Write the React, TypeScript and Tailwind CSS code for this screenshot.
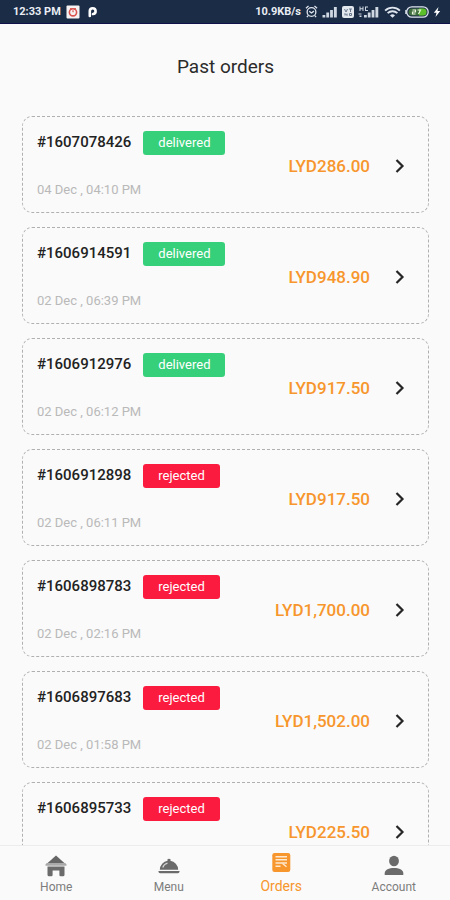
import React, { useState } from 'react';

type OrderStatus = 'delivered' | 'rejected';

interface Order {
  id: string;
  status: OrderStatus;
  date?: string;
  total: string;
}

const orders: Order[] = [
  { id: '1607078426', status: 'delivered', date: '04 Dec , 04:10 PM', total: 'LYD286.00' },
  { id: '1606914591', status: 'delivered', date: '02 Dec , 06:39 PM', total: 'LYD948.90' },
  { id: '1606912976', status: 'delivered', date: '02 Dec , 06:12 PM', total: 'LYD917.50' },
  { id: '1606912898', status: 'rejected', date: '02 Dec , 06:11 PM', total: 'LYD917.50' },
  { id: '1606898783', status: 'rejected', date: '02 Dec , 02:16 PM', total: 'LYD1,700.00' },
  { id: '1606897683', status: 'rejected', date: '02 Dec , 01:58 PM', total: 'LYD1,502.00' },
  { id: '1606895733', status: 'rejected', total: 'LYD225.50' },
];

const statusColors: Record<OrderStatus, string> = {
  delivered: 'bg-[#37d07a]',
  rejected: 'bg-[#fb1b3f]',
};

const SignalIcon = () => (
  <svg viewBox="0 0 16 12" className="h-3 w-4" fill="#cfd7e2">
    <path d="M0.500 9h2.800v2.500H0.500zM4.300 6.500h2.800v5H4.300zM8.100 4h2.800v7.500H8.100zM11.900 1h2.900v10.500h-2.900z" />
  </svg>
);

const StatusBar = () => (
  <header className="flex h-6 shrink-0 items-center justify-between border-b border-[#10104a] bg-[#1b2c46] pl-[13px] pr-[9px] text-[11px] font-bold leading-4 text-[#e9edf3]">
    <div className="flex items-center gap-[5px]">
      <span>12:33 PM</span>
      <svg viewBox="0 0 14 14" className="size-[14px]">
        <rect x="0.5" y="0.5" width="13" height="13" rx="1" fill="#f6f2f3" />
        <circle cx="7" cy="7.3" r="3.6" fill="none" stroke="#d9534f" strokeWidth="1.6" />
        <path d="M4 3.6l2.2.6M10 3.6l-2.2.6M7 5.2v2" stroke="#d9534f" strokeWidth="1.2" />
      </svg>
      <svg viewBox="0 0 12 14" className="ml-[2px] h-[14px] w-3">
        <path
          d="M2.800 11V6a2.900 2.900 0 1 1 3.200 3"
          fill="none"
          stroke="#fff"
          strokeWidth="2.600"
          strokeLinecap="round"
        />
      </svg>
    </div>
    <div className="flex items-center gap-1">
      <span>10.9KB/s</span>
      <svg viewBox="0 0 14 14" className="size-[13px]" fill="none" stroke="#dfe5ee" strokeWidth="1.4">
        <circle cx="7" cy="7.6" r="4.7" />
        <path d="M1 3.6L3.8 1.2M13 3.6l-2.8-2.4M4.6 6.6L7 8.6l2.6-2M3.4 11.4L2 13M10.6 11.4L12 13" />
      </svg>
      <SignalIcon />
      <svg viewBox="0 0 12 12" className="size-3">
        <rect width="12" height="12" rx="2" fill="#e3e8ef" />
        <path d="M2.5 3l1.500 3 1.500-3M7 3h3M8.500 3v3M3 9.500V7.500l2 2v-2M7.500 7.500h2v2h-2z" fill="none" stroke="#6b788c" strokeWidth="1" />
      </svg>
      <svg viewBox="0 0 22 12" className="h-3 w-[22px]" fill="#cfd7e2">
        <path d="M6 9h2.800v2.500H6zM9.800 6.500h2.800v5H9.800zM13.600 4h2.800v7.500h-2.800zM17.400 1h2.900v10.500h-2.900z" />
        <path d="M1.500 0.500h1v4.500h-1zM4.500 0.500h1v4.500h-1zM2 2.300h3v1H2zM7 0.500h3v1H8v2.500h2v1H7zM0.500 7.500h3v1H0.500zM1.500 9.500h2v1.500h-2z" />
      </svg>
      <svg viewBox="0 0 18 13" className="h-3 w-[17px]" fill="none" stroke="#dfe5ee" strokeWidth="2">
        <path d="M1 5a11.500 11.500 0 0 1 16 0M3.700 7.800a7.600 7.600 0 0 1 10.600 0" />
        <path d="M6.300 10.200a4 4 0 0 1 5.400 0L9 12.800z" fill="#dfe5ee" stroke="none" />
      </svg>
      <svg viewBox="0 0 24 12" className="h-3 w-6">
        <rect x="1.700" y="0.800" width="21.500" height="10.400" rx="5.200" fill="#1b2c46" stroke="#dfe5ee" strokeWidth="1.300" />
        <path d="M1 4v4" stroke="#dfe5ee" strokeWidth="1.500" />
        <path d="M7 2.500h11a3.500 3.500 0 0 1 0 7H7a3.500 3.500 0 0 1 0-7z" fill="#3f6f3d" />
        <path d="M14 2.500h4a3.500 3.500 0 0 1 0 7h-4z" fill="#5cc02a" />
        <path d="M7.500 4h3v2h-3v2h3M12.500 4h3l-2 4" fill="none" stroke="#e9f5df" strokeWidth="1.200" />
      </svg>
      <svg viewBox="0 0 8 12" className="h-3 w-2">
        <path d="M5.500 1L.800 6.800h2.700L2.500 11l4.700-6H4.500z" fill="#fff" />
      </svg>
    </div>
  </header>
);

const OrderCard: React.FC<{ order: Order }> = ({ order }) => (
  <li>
    <button
      type="button"
      className="flex w-full items-center rounded-[10px] border border-dashed border-[#b0b0b0] px-[14px] pb-3 pt-[14px] text-left"
    >
      <span className="flex flex-1 flex-col gap-6">
        <span className="flex items-start gap-3">
          <span className="text-[15px] font-medium leading-[22px] text-[#222]">#{order.id}</span>
          <span
            className={`rounded-[3px] px-[15px] text-[13px] leading-6 text-white ${statusColors[order.status]}`}
          >
            {order.status}
          </span>
        </span>
        <span className="h-[21px] text-[13px] leading-[21px] text-[#b9b9b9]">{order.date}</span>
      </span>
      <span className="text-[17px] font-medium leading-6 text-[#f7962c]">{order.total}</span>
      <svg viewBox="0 0 12 16" className="ml-6 mr-2 h-4 w-3" fill="none" stroke="#262626" strokeWidth="2.200">
        <path d="M2.500 2l6 6-6 6" />
      </svg>
    </button>
  </li>
);

const HomeIcon = () => (
  <svg viewBox="0 0 24 24" className="size-6">
    <path d="M12 1.500L2.500 10h19z" fill="#666" />
    <path d="M1.500 10.200L3 9h18l1.500 1.200v1.600h-21z" fill="#a9a9a9" />
    <path
      d="M3.500 12.600h17v8.200a1.500 1.500 0 0 1-1.500 1.500h-2.300a1.300 1.300 0 0 1-1.300-1.300v-4.500H8.600V21a1.300 1.300 0 0 1-1.300 1.300H5a1.500 1.500 0 0 1-1.500-1.500z"
      fill="#6b6b6b"
    />
  </svg>
);

const MenuIcon = () => (
  <svg viewBox="0 0 24 24" className="size-6" fill="#6b6b6b">
    <path d="M2.800 15.800a9.200 9.600 0 0 1 7.800-9 1.500 1.500 0 1 1 2.800 0 9.200 9.600 0 0 1 7.800 9z" />
    <path d="M1.500 17h21v.6a1.600 1.600 0 0 1-1.600 1.600H3.100a1.600 1.600 0 0 1-1.600-1.600z" />
    <path d="M5.800 13.500a6.500 6.500 0 0 1 4.700-4.300" fill="none" stroke="#d5d5d5" strokeWidth="1.200" />
  </svg>
);

const OrdersIcon = () => (
  <svg viewBox="0 0 24 24" className="size-6">
    <rect x="3.300" y="2" width="18" height="19" rx="2.200" fill="#f7962c" />
    <path d="M6.500 5.700h11.500M6.500 8.800h11.500M6.500 12h11.500" stroke="#ffe9cf" strokeWidth="1.400" />
    <path d="M6.500 15.300h5M13.500 12.500l4 3.300" stroke="#ffe9cf" strokeWidth="1.400" />
  </svg>
);

const AccountIcon = () => (
  <svg viewBox="0 0 24 24" className="size-6" fill="#6b6b6b">
    <ellipse cx="12" cy="7" rx="4.900" ry="5.300" />
    <path d="M2.700 21v-1.700c0-3.600 4.400-5.300 9.300-5.300s9.300 1.700 9.300 5.300V21z" />
  </svg>
);

const tabs = [
  { label: 'Home', Icon: HomeIcon },
  { label: 'Menu', Icon: MenuIcon },
  { label: 'Orders', Icon: OrdersIcon },
  { label: 'Account', Icon: AccountIcon },
];

const App: React.FC = () => {
  const [activeTab, setActiveTab] = useState('Orders');

  return (
    <div className="flex h-screen flex-col bg-[#fafafa] font-[Roboto,sans-serif]">
      <StatusBar />
      <main className="flex-1 overflow-y-auto pl-[22px] pr-[21px] [scrollbar-width:none]">
        <h1 className="pb-[37px] pt-[31px] text-center text-[19px] leading-6 text-[#2b2b2b]">Past orders</h1>
        <ul className="flex flex-col gap-[14px] pb-4">
          {orders.map((order) => (
            <OrderCard key={order.id} order={order} />
          ))}
        </ul>
      </main>
      <nav className="grid h-[55px] shrink-0 grid-cols-4 border-t border-[#ececec] bg-[#fafafa]">
        {tabs.map(({ label, Icon }) => {
          const isActive = activeTab === label;
          return (
            <button
              key={label}
              type="button"
              onClick={() => setActiveTab(label)}
              className={`flex flex-col items-center leading-4 ${
                isActive ? 'gap-[3px] pt-[5px] text-[14px] text-[#f7962c]' : 'gap-px pt-2 text-[12px] text-[#7d7d7d]'
              }`}
            >
              <Icon />
              {label}
            </button>
          );
        })}
      </nav>
    </div>
  );
};

export default App;
